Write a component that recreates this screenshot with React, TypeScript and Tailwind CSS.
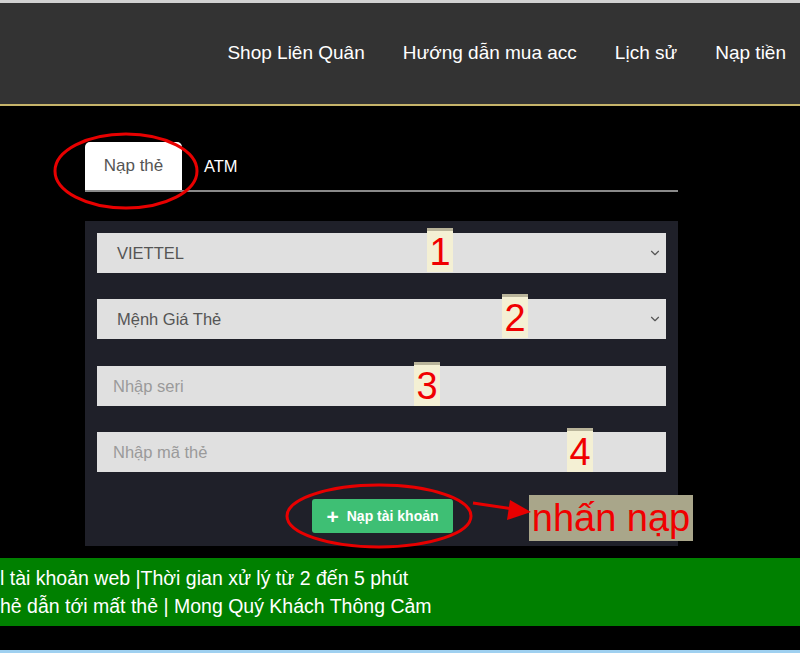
import { ChevronDown } from "lucide-react";

const font = { fontFamily: '"Liberation Sans", Arial, sans-serif' };

function Marker({ n, className }: { n: string; className: string }) {
  return (
    <span
      className={`absolute flex h-[44px] w-[26px] items-center justify-center border-t-[3px] border-[#b9b49a] bg-[#f4f0d4] text-[38px] leading-none text-[#f00000] ${className}`}
    >
      {n}
    </span>
  );
}

function SelectBox({ label }: { label: string }) {
  return (
    <div className="flex h-[40px] items-center justify-between bg-[#e0e0e0] pl-5 pr-[4px] text-[16.5px] text-[#555]">
      <span>{label}</span>
      <ChevronDown className="h-[14px] w-[14px] text-[#555]" strokeWidth={2} />
    </div>
  );
}

function InputBox({ placeholder }: { placeholder: string }) {
  return (
    <div className="flex h-[40px] items-center bg-[#e0e0e0] px-4 text-[16.5px] text-[#9a9a9a]">
      {placeholder}
    </div>
  );
}

export default function App() {
  return (
    <div className="relative h-[653px] w-[800px] overflow-hidden bg-black" style={font}>
      <div className="h-[3px] bg-[#d2d2d2]" />
      <header className="flex h-[103px] items-center justify-end gap-[38px] border-b-[2px] border-[#c6b46a] bg-[#333333] pr-[14px] text-[19px] text-white">
        <span>Shop Liên Quân</span>
        <span>Hướng dẫn mua acc</span>
        <span>Lịch sử</span>
        <span>Nạp tiền</span>
      </header>

      <div className="ml-[85px] mt-[36px] w-[593px]">
        <div className="flex items-end border-b-[2px] border-[#8a8a8a]">
          <div className="flex h-[48px] w-[97px] items-center justify-center rounded-t-[5px] bg-white text-[17px] text-[#555]">
            Nạp thẻ
          </div>
          <div className="flex h-[48px] items-center px-[22px] text-[16.5px] text-white">ATM</div>
        </div>

        <div className="mt-[29px] flex flex-col bg-[#1f2029] px-[12px] pb-[13px] pt-[12px]">
          <SelectBox label="VIETTEL" />
          <div className="mt-[26px]">
            <SelectBox label="Mệnh Giá Thẻ" />
          </div>
          <div className="mt-[27px]">
            <InputBox placeholder="Nhập seri" />
          </div>
          <div className="mt-[26px]">
            <InputBox placeholder="Nhập mã thẻ" />
          </div>
          <div className="mt-[27px] flex justify-center pl-[2px]">
            <button className="flex h-[34px] items-center gap-2 rounded-[3px] bg-[#3ebf74] px-[14px] text-[14px] font-bold text-white">
              <span className="text-[21px] leading-none">+</span>
              Nạp tài khoản
            </button>
          </div>
        </div>
      </div>

      <div className="mt-[12px] flex h-[68px] flex-col justify-center gap-[6px] bg-[#008000] text-[19.5px] text-white">
        <p className="leading-[22px]">l tài khoản web |Thời gian xử lý từ 2 đến 5 phút</p>
        <p className="leading-[22px]">hẻ dẫn tới mất thẻ | Mong Quý Khách Thông Cảm</p>
      </div>
      <div className="absolute bottom-0 left-0 h-[3px] w-full bg-[#9fd0f0]" />

      <Marker n="1" className="left-[427px] top-[228px]" />
      <Marker n="2" className="left-[502px] top-[294px]" />
      <Marker n="3" className="left-[414px] top-[362px]" />
      <Marker n="4" className="left-[567px] top-[428px]" />

      <div className="absolute left-[529px] top-[495px] flex h-[46px] w-[164px] items-center justify-center bg-[#a9a68a] text-[38px] leading-none text-[#f00000]">
        nhấn nạp
      </div>

      <svg className="pointer-events-none absolute left-0 top-0" width="800" height="653">
        <ellipse cx="126" cy="171" rx="71" ry="37" fill="none" stroke="#e80000" strokeWidth="3" />
        <ellipse cx="379" cy="516" rx="92" ry="31" fill="none" stroke="#e80000" strokeWidth="3" />
        <line x1="473" y1="503" x2="514" y2="509" stroke="#e80000" strokeWidth="3" />
        <polygon points="531,512 510,500 507,520" fill="#e80000" />
      </svg>
    </div>
  );
}
